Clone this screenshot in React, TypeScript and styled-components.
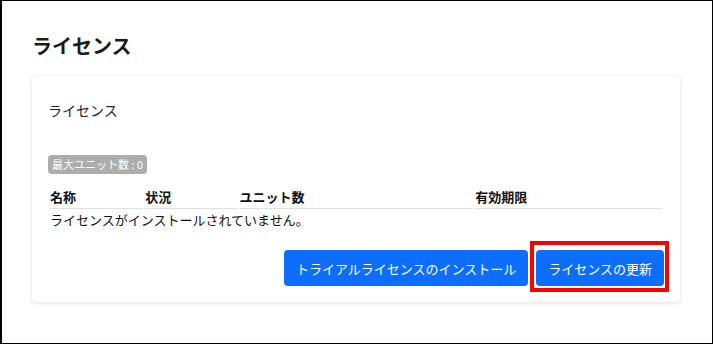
import styled, { createGlobalStyle } from "styled-components";

const GlobalStyle = createGlobalStyle`
  html, body {
    margin: 0;
    padding: 0;
    background: #ffffff;
  }
  body {
    font-family: "Noto Sans CJK JP", "Noto Sans", sans-serif;
    color: #212529;
  }
`;

const Frame = styled.div`
  box-sizing: border-box;
  height: 100vh;
  border-style: solid;
  border-color: #000;
  border-width: 1px 1px 1px 2px;
  padding: 31px 32px 0 30px;
`;

const PageTitle = styled.h1`
  margin: 0 0 16px;
  font-size: 20px;
  line-height: 28px;
  font-weight: 700;
  color: #1a1a1a;
`;

const Card = styled.section`
  background: #fff;
  border-radius: 4px;
  box-shadow: 0 1px 4px rgba(0, 0, 0, 0.13);
  padding: 24px 16px 16px;
`;

const CardLabel = styled.div`
  font-size: 14px;
  line-height: 20px;
  color: #212529;
`;

const Badge = styled.span`
  display: inline-block;
  margin-top: 35px;
  padding: 2px 4px;
  font-size: 11px;
  line-height: 15px;
  color: #fff;
  background: #adadad;
  border-radius: 4px;
`;

const Table = styled.table`
  width: 100%;
  margin-top: 12px;
  border-spacing: 2px;
  font-size: 13px;
`;

const Th = styled.th<{ $w: number }>`
  width: ${(p) => p.$w}px;
  padding: 0 0 2px;
  text-align: left;
  font-weight: 700;
  line-height: 18px;
  color: #111;
  border-bottom: 1px solid #dee2e6;
`;

const Td = styled.td`
  padding: 0;
  line-height: 18px;
  color: #111;
`;

const Actions = styled.div`
  display: flex;
  justify-content: flex-end;
  gap: 8px;
  margin-top: 19px;
`;

const Button = styled.button`
  position: relative;
  height: 36px;
  padding: 0 12px;
  border: none;
  border-radius: 4px;
  background: #0d6efd;
  color: #fff;
  font-family: inherit;
  font-size: 13px;
  cursor: pointer;
`;

const Highlight = styled.span`
  position: absolute;
  top: -9px;
  bottom: -6px;
  left: -6px;
  right: -5px;
  border: 4px solid #ff0000;
  pointer-events: none;
`;

const columns = [
  { label: "名称", w: 93 },
  { label: "状況", w: 92 },
  { label: "ユニット数", w: 233 },
  { label: "有効期限", w: 186 },
];

export default function App() {
  return (
    <>
      <GlobalStyle />
      <Frame>
        <PageTitle>ライセンス</PageTitle>
        <Card>
          <CardLabel>ライセンス</CardLabel>
          <Badge>最大ユニット数 : 0</Badge>
          <Table>
            <thead>
              <tr>
                {columns.map((c) => (
                  <Th key={c.label} $w={c.w}>
                    {c.label}
                  </Th>
                ))}
              </tr>
            </thead>
            <tbody>
              <tr>
                <Td colSpan={4}>ライセンスがインストールされていません。</Td>
              </tr>
            </tbody>
          </Table>
          <Actions>
            <Button>トライアルライセンスのインストール</Button>
            <Button>
              ライセンスの更新
              <Highlight />
            </Button>
          </Actions>
        </Card>
      </Frame>
    </>
  );
}
